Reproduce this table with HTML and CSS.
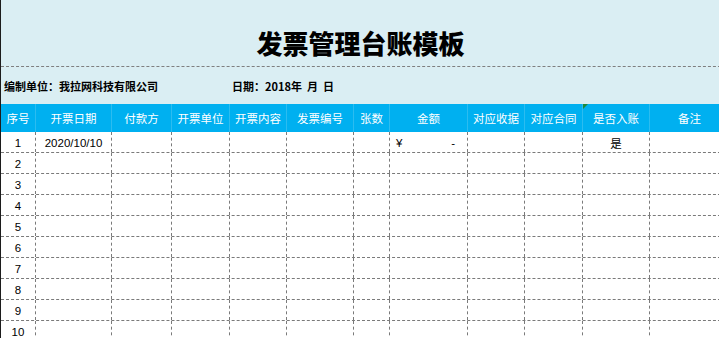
FILE: index.html
```html
<!DOCTYPE html>
<html lang="zh-CN">
<head>
<meta charset="utf-8">
<title>发票管理台账模板</title>
<link rel="stylesheet" href="styles.css">
</head>
<body>
<div class="sheet">
  <div class="title">发票管理台账模板</div>
  <div class="info">
    <span class="unit">编制单位：我拉网科技有限公司</span>
    <span class="date">日期：2018年  月  日</span>
  </div>
  <div class="row head">
    <div class="c">序号</div>
    <div class="c">开票日期</div>
    <div class="c">付款方</div>
    <div class="c">开票单位</div>
    <div class="c">开票内容</div>
    <div class="c">发票编号</div>
    <div class="c">张数</div>
    <div class="c">金额</div>
    <div class="c">对应收据</div>
    <div class="c">对应合同</div>
    <div class="c note-cell">是否入账<span class="flag"></span></div>
    <div class="c">备注</div>
  </div>
  <div class="row">
    <div class="c">1</div><div class="c">2020/10/10</div><div class="c"></div><div class="c"></div><div class="c"></div><div class="c"></div><div class="c"></div>
    <div class="c money"><span>¥</span><span>-</span></div>
    <div class="c"></div><div class="c"></div><div class="c cjk">是</div><div class="c"></div>
  </div>
  <div class="row"><div class="c">2</div><div class="c"></div><div class="c"></div><div class="c"></div><div class="c"></div><div class="c"></div><div class="c"></div><div class="c"></div><div class="c"></div><div class="c"></div><div class="c"></div><div class="c"></div></div>
  <div class="row"><div class="c">3</div><div class="c"></div><div class="c"></div><div class="c"></div><div class="c"></div><div class="c"></div><div class="c"></div><div class="c"></div><div class="c"></div><div class="c"></div><div class="c"></div><div class="c"></div></div>
  <div class="row"><div class="c">4</div><div class="c"></div><div class="c"></div><div class="c"></div><div class="c"></div><div class="c"></div><div class="c"></div><div class="c"></div><div class="c"></div><div class="c"></div><div class="c"></div><div class="c"></div></div>
  <div class="row"><div class="c">5</div><div class="c"></div><div class="c"></div><div class="c"></div><div class="c"></div><div class="c"></div><div class="c"></div><div class="c"></div><div class="c"></div><div class="c"></div><div class="c"></div><div class="c"></div></div>
  <div class="row"><div class="c">6</div><div class="c"></div><div class="c"></div><div class="c"></div><div class="c"></div><div class="c"></div><div class="c"></div><div class="c"></div><div class="c"></div><div class="c"></div><div class="c"></div><div class="c"></div></div>
  <div class="row"><div class="c">7</div><div class="c"></div><div class="c"></div><div class="c"></div><div class="c"></div><div class="c"></div><div class="c"></div><div class="c"></div><div class="c"></div><div class="c"></div><div class="c"></div><div class="c"></div></div>
  <div class="row"><div class="c">8</div><div class="c"></div><div class="c"></div><div class="c"></div><div class="c"></div><div class="c"></div><div class="c"></div><div class="c"></div><div class="c"></div><div class="c"></div><div class="c"></div><div class="c"></div></div>
  <div class="row"><div class="c">9</div><div class="c"></div><div class="c"></div><div class="c"></div><div class="c"></div><div class="c"></div><div class="c"></div><div class="c"></div><div class="c"></div><div class="c"></div><div class="c"></div><div class="c"></div></div>
  <div class="row"><div class="c">10</div><div class="c"></div><div class="c"></div><div class="c"></div><div class="c"></div><div class="c"></div><div class="c"></div><div class="c"></div><div class="c"></div><div class="c"></div><div class="c"></div><div class="c"></div></div>
</div>
</body>
</html>
```

FILE: styles.css
```css
html, body {
  margin: 0;
  padding: 0;
  background: #ffffff;
  overflow: hidden;
}

.sheet {
  width: 730px;
  border-left: 1px solid #1c1c1c;
  font-family: "Noto Sans CJK SC", "Noto Sans", sans-serif;
}

.title {
  box-sizing: border-box;
  height: 67px;
  background: #daeef3;
  border-bottom: 1px dashed #7f7f7f;
  display: flex;
  align-items: center;
  justify-content: center;
  padding-left: 0;
  padding-right: 11px;
  padding-top: 18px;
  font-size: 26px;
  font-weight: 900;
  color: #000;
  letter-spacing: 0;
}

.info {
  height: 37px;
  background: #daeef3;
  display: flex;
  align-items: center;
  font-size: 11px;
  font-weight: 700;
  color: #000;
  padding-left: 3px;
}

.info .unit {
  width: 228px;
}

.info .date {
  white-space: pre;
}

.row {
  display: grid;
  grid-template-columns: 35px 76px 60px 58px 57px 67px 36px 78px 57px 58px 67px 80px;
  box-sizing: border-box;
  height: 21px;
  border-bottom: 1px dashed #7a7a7a;
  background: #ffffff;
}

.row .c {
  border-right: 1px dashed #7a7a7a;
  display: flex;
  align-items: center;
  justify-content: center;
  font-family: "Liberation Sans", "Noto Sans CJK SC", sans-serif;
  font-size: 11.5px;
  color: #000;
  position: relative;
  padding-top: 1px;
}

.row .cjk {
  font-family: "Noto Sans CJK SC", sans-serif;
  font-size: 11.5px;
}

.row .money {
  justify-content: space-between;
  padding: 1px 12px 0 6px;
}

.row.head {
  height: 28px;
  border-bottom: none;
  background: #00b0f0;
}

.row.head .c {
  border-right: 1px solid #2cbcf0;
  font-family: "Noto Sans CJK SC", sans-serif;
  font-size: 11.5px;
  color: #ffffff;
  padding-top: 0;
}

.flag {
  position: absolute;
  left: 0;
  top: 0;
  width: 0;
  height: 0;
  border-top: 5px solid #1d8a3c;
  border-right: 5px solid transparent;
}
```
